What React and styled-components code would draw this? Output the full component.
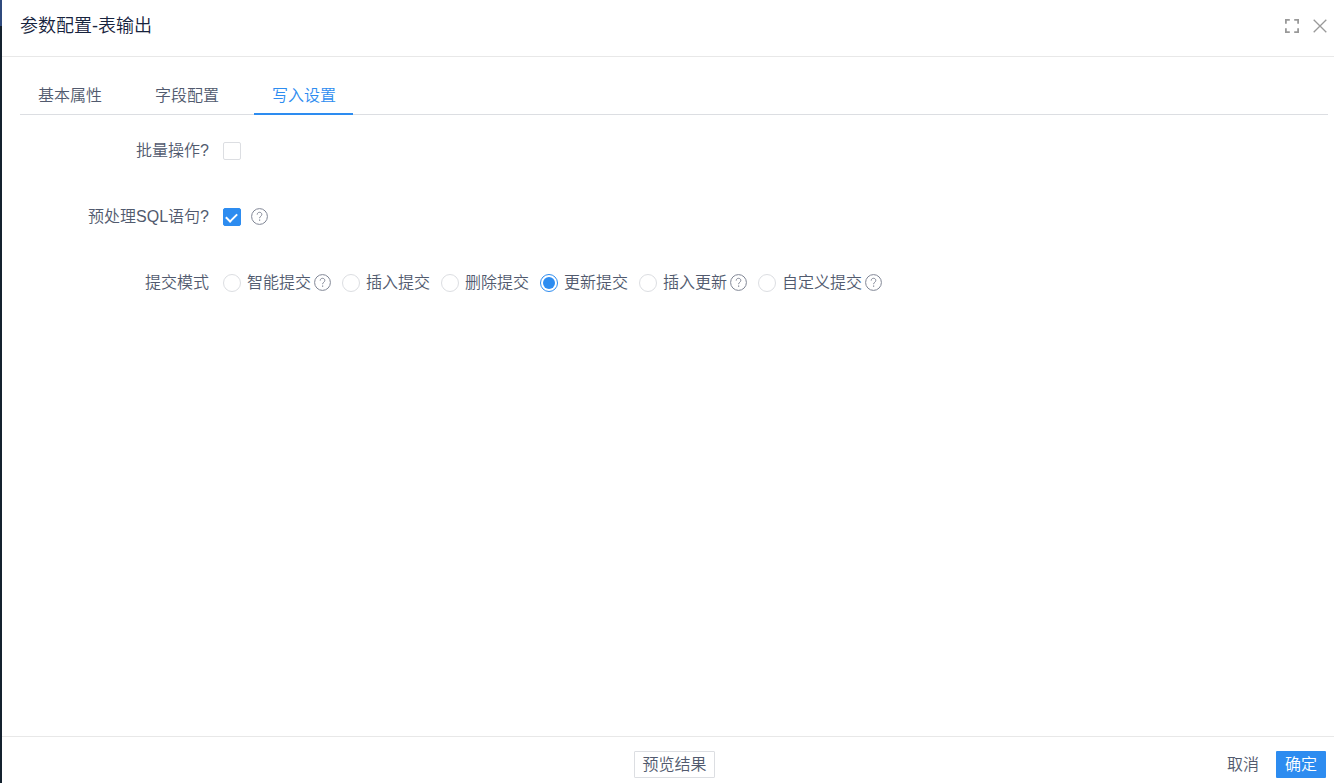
import { useState } from "react";
import styled, { createGlobalStyle } from "styled-components";

const GlobalStyle = createGlobalStyle`
  * {
    box-sizing: border-box;
  }

  body {
    margin: 0;
    background: #fff;
    color: #515a6e;
    font: 350 16px/24px "Liberation Sans", "Noto Sans CJK SC", sans-serif;
  }

  button,
  input {
    margin: 0;
    font: inherit;
    color: inherit;
  }
`;

// Layout
const Page = styled.div`
  display: flex;
  min-height: 100vh;
`;

const Backdrop = styled.div`
  width: 2px;
  background: linear-gradient(#2f4a7d 26px, #14212e 26px);
`;

const Drawer = styled.section`
  flex: 1;
  display: flex;
  flex-direction: column;
`;

const Header = styled.header`
  display: flex;
  justify-content: space-between;
  padding: 14px 7px 18px 18px;
  border-bottom: 1px solid #e8e8e8;
`;

const Title = styled.h1`
  margin: 0;
  font-size: 18px;
  font-weight: 350;
  color: #17233d;
`;

const HeaderActions = styled.div`
  display: flex;
  align-items: center;
  gap: 14px;
`;

const IconButton = styled.button`
  display: flex;
  padding: 0;
  border: 0;
  background: none;
  color: #999;
  cursor: pointer;
`;

const Body = styled.main`
  flex: 1;
  padding: 20px 6px 20px 18px;
`;

// Tabs
const TabBar = styled.div`
  display: flex;
  gap: 18px;
  border-bottom: 1px solid #dcdee2;
`;

const Tab = styled.button`
  height: 38px;
  margin-bottom: -1px;
  padding: 2px 17px 0 18px;
  border: 0;
  border-bottom: 2px solid ${(props) => (props.$active ? "#2d8cf0" : "transparent")};
  background: none;
  color: ${(props) => (props.$active ? "#2d8cf0" : "#515a6e")};
  cursor: pointer;
`;

// Form
const Form = styled.form`
  display: flex;
  flex-direction: column;
  gap: 42px;
  padding-top: 24px;
`;

const FormRow = styled.div`
  display: grid;
  grid-template-columns: 189px 1fr;
  align-items: center;
  column-gap: 14px;
`;

const FieldLabel = styled.label`
  text-align: right;
`;

const Control = styled.div`
  display: flex;
  align-items: center;
  gap: 10px;
`;

const Checkbox = styled.input`
  appearance: none;
  display: grid;
  place-items: center;
  width: 18px;
  height: 18px;
  border: 1px solid #dcdee2;
  border-radius: 2px;
  cursor: pointer;

  &:checked {
    border-color: #2d8cf0;
    background: #2d8cf0;
  }

  &:checked::after {
    content: "";
    width: 5px;
    height: 9px;
    margin: 0 1px 2px 0;
    border: solid #fff;
    border-width: 0 2px 2px 0;
    transform: rotate(45deg);
  }
`;

const RadioGroup = styled.div`
  display: flex;
  flex-wrap: wrap;
  gap: 11px;
`;

const RadioItem = styled.div`
  display: flex;
  align-items: center;
  gap: 3px;
`;

const RadioLabel = styled.label`
  display: flex;
  align-items: center;
  gap: 6px;
  cursor: pointer;
`;

const Radio = styled.input`
  appearance: none;
  display: grid;
  place-items: center;
  width: 18px;
  height: 18px;
  border: 1px solid #dcdee2;
  border-radius: 50%;
  cursor: pointer;

  &:checked {
    border-color: #2d8cf0;
  }

  &:checked::after {
    content: "";
    width: 12px;
    height: 12px;
    border-radius: 50%;
    background: #2d8cf0;
  }
`;

const HelpSvg = styled.svg`
  display: block;
  margin-bottom: 1px;
  color: #808695;
`;

// Footer
const Footer = styled.footer`
  display: grid;
  grid-template-columns: 1fr auto 1fr;
  align-items: center;
  padding: 14px 8px 5px 21px;
  border-top: 1px solid #e8e8e8;
`;

const FooterActions = styled.div`
  grid-column: 3;
  display: flex;
  justify-content: flex-end;
  gap: 8px;
`;

const Button = styled.button`
  height: 27px;
  padding: 0 9px;
  border: 0;
  border-radius: 1px;
  line-height: 24px;
  background: ${(props) => (props.$primary ? "#2d8cf0" : "none")};
  color: ${(props) => (props.$primary ? "#fff" : "#515a6e")};
  cursor: pointer;
`;

const PreviewButton = styled(Button)`
  grid-column: 2;
  padding: 0 7px;
  border: 1px solid #dcdee2;
`;

const HelpIcon = () => (
  <HelpSvg width="17" height="17" viewBox="0 0 17 17" fill="none" stroke="currentColor" aria-hidden="true">
    <circle cx="8.5" cy="8.5" r="7.9" />
    <path d="M6.2 6.6c0-1.4 1-2.3 2.3-2.3s2.3.9 2.3 2.1c0 1.9-2.2 1.9-2.2 3.8" />
    <path d="M8.6 11.5v1.3" strokeWidth="1.2" />
  </HelpSvg>
);

const tabs = ["基本属性", "字段配置", "写入设置"];

const modes = [
  { value: "smart", label: "智能提交", help: true },
  { value: "insert", label: "插入提交" },
  { value: "delete", label: "删除提交" },
  { value: "update", label: "更新提交" },
  { value: "upsert", label: "插入更新", help: true },
  { value: "custom", label: "自定义提交", help: true },
];

const App = () => {
  const [activeTab, setActiveTab] = useState("写入设置");
  const [formData, setFormData] = useState({
    batch: false,
    prepared: true,
    mode: "update",
  });

  // onChange handlers for controlled components
  const onCheck = (e) =>
    setFormData({ ...formData, [e.target.name]: e.target.checked });

  const onChange = (e) =>
    setFormData({ ...formData, [e.target.name]: e.target.value });

  return (
    <Page>
      <GlobalStyle />
      <Backdrop />
      <Drawer>
        <Header>
          <Title>参数配置-表输出</Title>
          <HeaderActions>
            <IconButton type="button" aria-label="全屏">
              <svg width="14" height="14" viewBox="0 0 14 14" fill="none" stroke="currentColor" strokeWidth="1.8">
                <path d="M.9 4.8V.9h3.9M9.2.9h3.9v3.9M13.1 9.2v3.9H9.2M4.8 13.1H.9V9.2" />
              </svg>
            </IconButton>
            <IconButton type="button" aria-label="关闭">
              <svg width="14" height="14" viewBox="0 0 14 14" fill="none" stroke="currentColor" strokeWidth="1.3">
                <path d="M.7.7l12.6 12.6M13.3.7L.7 13.3" />
              </svg>
            </IconButton>
          </HeaderActions>
        </Header>

        <Body>
          <TabBar role="tablist">
            {tabs.map((tab) => (
              <Tab
                key={tab}
                type="button"
                role="tab"
                aria-selected={tab === activeTab}
                $active={tab === activeTab}
                onClick={() => setActiveTab(tab)}
              >
                {tab}
              </Tab>
            ))}
          </TabBar>

          <Form>
            <FormRow>
              <FieldLabel htmlFor="batch">批量操作?</FieldLabel>
              <Control>
                <Checkbox
                  type="checkbox"
                  name="batch"
                  id="batch"
                  checked={formData.batch}
                  onChange={onCheck}
                />
              </Control>
            </FormRow>

            <FormRow>
              <FieldLabel htmlFor="prepared">预处理SQL语句?</FieldLabel>
              <Control>
                <Checkbox
                  type="checkbox"
                  name="prepared"
                  id="prepared"
                  checked={formData.prepared}
                  onChange={onCheck}
                />
                <HelpIcon />
              </Control>
            </FormRow>

            <FormRow>
              <FieldLabel as="span" id="mode-label">
                提交模式
              </FieldLabel>
              <RadioGroup role="radiogroup" aria-labelledby="mode-label">
                {modes.map(({ value, label, help }) => (
                  <RadioItem key={value}>
                    <RadioLabel>
                      <Radio
                        type="radio"
                        name="mode"
                        value={value}
                        checked={formData.mode === value}
                        onChange={onChange}
                      />
                      {label}
                    </RadioLabel>
                    {help && <HelpIcon />}
                  </RadioItem>
                ))}
              </RadioGroup>
            </FormRow>
          </Form>
        </Body>

        <Footer>
          <PreviewButton type="button">预览结果</PreviewButton>
          <FooterActions>
            <Button type="button">取消</Button>
            <Button type="button" $primary>
              确定
            </Button>
          </FooterActions>
        </Footer>
      </Drawer>
    </Page>
  );
};

export default App;
